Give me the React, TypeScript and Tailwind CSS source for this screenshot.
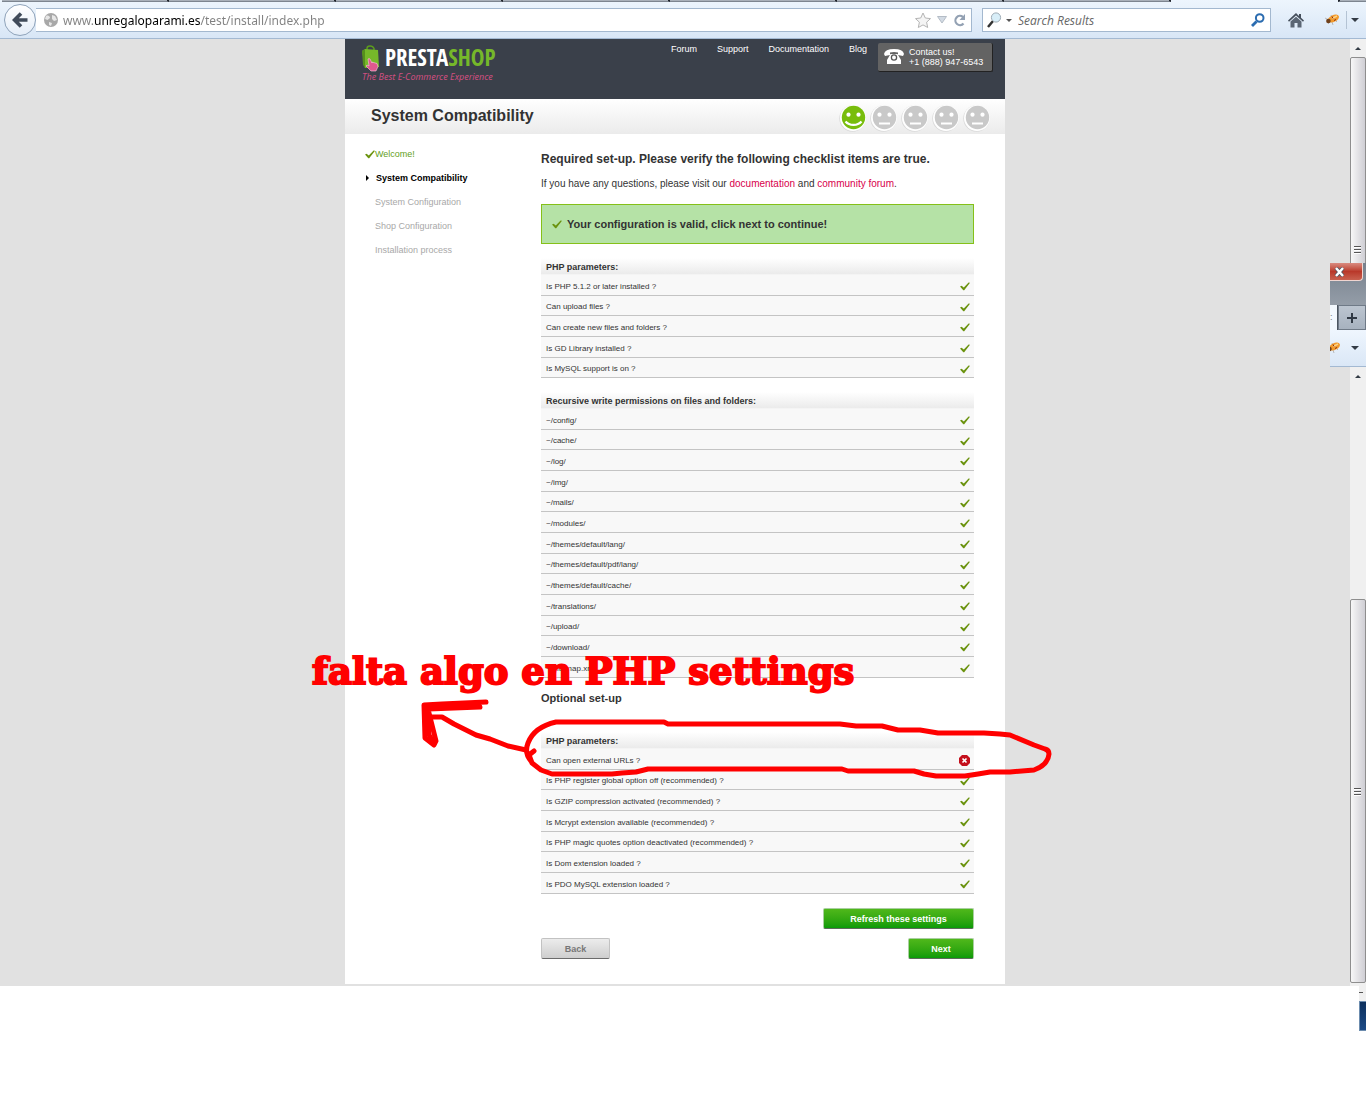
import type { ReactNode } from "react";

const steps = ["System Configuration", "Shop Configuration", "Installation process"];

const required = [
  "Is PHP 5.1.2 or later installed ?",
  "Can upload files ?",
  "Can create new files and folders ?",
  "Is GD Library installed ?",
  "Is MySQL support is on ?",
];

const folders = [
  "~/config/",
  "~/cache/",
  "~/log/",
  "~/img/",
  "~/mails/",
  "~/modules/",
  "~/themes/default/lang/",
  "~/themes/default/pdf/lang/",
  "~/themes/default/cache/",
  "~/translations/",
  "~/upload/",
  "~/download/",
  "~/sitemap.xml",
];

const optional = [
  "Can open external URLs ?",
  "Is PHP register global option off (recommended) ?",
  "Is GZIP compression activated (recommended) ?",
  "Is Mcrypt extension available (recommended) ?",
  "Is PHP magic quotes option deactivated (recommended) ?",
  "Is Dom extension loaded ?",
  "Is PDO MySQL extension loaded ?",
];

function Check() {
  return (
    <svg width="10" height="9" viewBox="0 0 10 9" className="shrink-0">
      <path d="M0 4.6 1.6 3.8 3.8 5.6 8.6.6 10 .8 4.2 8.2H3.3Z" fill="#6b930f" />
    </svg>
  );
}

function Cross() {
  return (
    <svg width="11" height="11" viewBox="0 0 11 11" className="shrink-0">
      <path d="M3 0h5l3 3v5l-3 3H3L0 8V3Z" fill="#c4101c" />
      <path d="M3.5 3.5l4 4m0-4l-4 4" stroke="#fff" strokeWidth="1.7" />
    </svg>
  );
}

function Face({ happy = false }: { happy?: boolean }) {
  return (
    <svg width="28" height="28" viewBox="0 0 28 28">
      <circle cx="13.5" cy="14.5" r="13.2" fill="#d9d9d9" />
      <circle cx="14" cy="14" r="13" fill="#fff" />
      <circle cx="14.5" cy="13.5" r="11.7" fill={happy ? "#78bd0c" : "#c9c9c9"} />
      <circle cx="9.5" cy="10.7" r="2.1" fill="#fff" />
      <circle cx="19.5" cy="10.7" r="2.1" fill="#fff" />
      {happy ? (
        <path d="M6.5 17.5c4 4.6 12 4.6 16 0" fill="none" stroke="#fff" strokeWidth="2.2" />
      ) : (
        <path d="M9 19.5h11" stroke="#fff" strokeWidth="2" />
      )}
    </svg>
  );
}

function Bug() {
  return (
    <svg width="16" height="14" viewBox="0 0 16 14" className="shrink-0">
      <path d="M1 5l4 2M4 11l2-3M9 12l-1-3M7 2l1 3M13 9l-2-2" stroke="#a9a9a9" strokeWidth=".8" />
      <ellipse cx="9.5" cy="5.5" rx="5.8" ry="3.4" transform="rotate(-25 9.5 5.5)" fill="#f29a2c" />
      <path d="M8 5.5l5-2.500" stroke="#fbd48a" strokeWidth="1.5" />
      <circle cx="4.4" cy="8" r="2.3" fill="#70401a" />
      <path d="M10 7.5l2-1M8 3.5l1 2" stroke="#8c2d12" />
    </svg>
  );
}

function Caret({ up = false }: { up?: boolean }) {
  return (
    <svg width="8" height="4" viewBox="0 0 8 4" className="shrink-0">
      <path d={up ? "M1 4h6L4 1Z" : "M0 0h8L4 4Z"} fill="#333b45" />
    </svg>
  );
}

function Grip() {
  return (
    <svg width="8" height="9" viewBox="0 0 8 9">
      <path d="M0 1.5h7M0 4.5h7M0 7.5h7" stroke="#555" />
      <path d="M0 2.5h7M0 5.5h7M0 8.5h7" stroke="#fff" />
    </svg>
  );
}

function Toolbar() {
  return (
    <header className="h-[39px] border-b border-[#a3b9d2] bg-linear-to-b from-[#edf5fd] to-[#d8e6f6]">
      {/* bottom edge of the tab strip */}
      <div className="flex h-[2px] pl-0.5">
        {[1, 2, 3, 4, 5, 6, 7].map((n) => (
          <div key={n} className="w-[167px] border-r-2 border-b border-[#20252c] border-b-[#7d858f] bg-[#a9b0b9]" />
        ))}
        <div className="flex-1" />
        <div className="w-7 border-l-2 border-b border-[#20252c] border-b-[#7d858f] bg-[#a9b0b9]" />
      </div>
      <div className="flex h-9 items-center">
        <button aria-label="Back" className="z-10 ml-1 grid size-8 shrink-0 place-items-center rounded-full border border-[#8fa3ba] bg-linear-to-b from-white to-[#e4edf8]">
          <svg width="16" height="16" viewBox="0 0 16 16">
            <path d="M9 1.5 2.5 8 9 14.5M3 8h12.5" fill="none" stroke="#404b5a" strokeWidth="3.6" />
          </svg>
        </button>
        <div className="flex h-6 flex-1 items-center border border-l-0 border-[#a3b8cf] bg-white pl-2">
          <svg width="14" height="14" viewBox="0 0 14 14" className="shrink-0">
            <circle cx="7" cy="7" r="7" fill="#a8a8a8" />
            <path d="M2 3c2-1 4 0 4 2L3.500 7 1 6ZM8 2l3 1 2 4-3 1-2-2ZM5 9l3 1-1 3-2-1Z" fill="#e6e6e6" />
          </svg>
          <input
            aria-label="Address"
            defaultValue="www.unregaloparami.es/test/install/index.php"
            className="mt-0.5 ml-[5px] min-w-0 flex-1 bg-[linear-gradient(to_right,#808080_31px,#000_31px,#000_137px,#808080_137px)] bg-clip-text font-['Noto_Sans',sans-serif] text-[12px] text-transparent outline-none"
          />
          <svg width="18" height="17" viewBox="0 0 18 17">
            <path d="M9 1l2.300 5 5.200.6-3.900 3.600 1.100 5.300L9 12.900l-4.700 2.600 1.100-5.300L1.500 6.600 6.700 6Z" fill="#f4f4f4" stroke="#b5b5b5" />
          </svg>
          <svg width="10" height="8" viewBox="0 0 10 8" className="ml-[5px]">
            <path d="M.5.5h9L5 7Z" fill="#d3dbe4" stroke="#b4bcc6" />
          </svg>
          <svg width="13" height="13" viewBox="0 0 13 13" className="mr-[5px] ml-1.5">
            <path d="M10.500 9.500A4.600 4.600 0 1 1 10 3" fill="none" stroke="#93a1b3" strokeWidth="2.200" />
            <path d="M12 0v6H6.500Z" fill="#93a1b3" />
          </svg>
        </div>
        <div className="ml-2.5 flex h-6 w-[289px] items-center border border-[#a3b8cf] bg-white pr-[5px] pl-1">
          <svg width="16" height="16" viewBox="0 0 16 16" className="shrink-0">
            <path d="M1 15l5-6" stroke="#333" strokeWidth="2.500" />
            <circle cx="9" cy="5.500" r="4.600" fill="#d8eef8" stroke="#9eabb5" />
          </svg>
          <svg width="6" height="3" viewBox="0 0 6 3" className="ml-[3px] shrink-0">
            <path d="M0 0h6L3 3Z" fill="#555" />
          </svg>
          <input aria-label="Search" placeholder="Search Results" className="mt-0.5 ml-1.5 min-w-0 flex-1 font-['Open_Sans',sans-serif] text-[12px] italic outline-none placeholder:text-[#666]" />
          <svg width="14" height="14" viewBox="0 0 14 14">
            <path d="M1 13l4.500-4.500" stroke="#2b6cb0" strokeWidth="2.800" />
            <circle cx="8.700" cy="5" r="3.800" fill="none" stroke="#2b6cb0" strokeWidth="2" />
          </svg>
        </div>
        <button aria-label="Home" className="ml-[17px]">
          <svg width="16" height="15" viewBox="0 0 16 15">
            <path d="M8 0 0 7.500l1 1.200L8 2.500l7 6.200 1-1.200-3-2.800V1h-2v2Z" fill="#454f5c" />
            <path d="M2.500 8.500 8 3.800l5.500 4.700V14.500H9.500V10h-3v4.500h-4Z" fill="#5b6674" />
          </svg>
        </button>
        <div className="ml-5 flex items-center pr-[7px]">
          <Bug />
          <span className="mr-1 ml-1.5 h-[18px] w-px bg-[#b4c3d4]" />
          <Caret />
        </div>
      </div>
    </header>
  );
}

function Phone() {
  return (
    <svg width="20" height="16" viewBox="0 0 20 16" className="shrink-0">
      <path d="M0 5Q1 0 10 0t10 5l-1 2-5-1V3.500Q10 2.500 6 3.500V6L1 7Z" fill="#fff" />
      <path d="M6.500 5h7l3.500 6v4H3v-4Z" fill="#fff" />
      <circle cx="10" cy="8.500" r="2.600" fill="#fff" stroke="#555" strokeWidth="1.300" />
    </svg>
  );
}

function ShopHeader() {
  return (
    <div className="flex h-[60px] items-start bg-[#3a404a] text-[9px] text-white">
      <a href="#home" className="mt-1.5 ml-4 block">
        <span className="flex h-[27px]">
          <svg width="20" height="27" viewBox="0 0 20 27">
            <path d="M6 6V3.500Q6 1 9 1t4 2.500V6" fill="none" stroke="#5c9c1c" strokeWidth="1.500" />
            <path d="M1 6l3-2 13 1 1 17-14 1Z" fill="#76b82a" />
            <path d="M1 6l3-2v19L2 20Z" fill="#568f1c" />
            <path d="M7 14q1-1 2 0l2 4V17l5 1.500 1 3-2 4.500h-5l-5-5 1-1 2 1Z" fill="#e0588f" stroke="#f8c8dc" strokeWidth=".6" />
          </svg>
          <span className="ml-1 font-['Open_Sans_Condensed','Open_Sans',sans-serif] text-[23px] leading-[25px] font-light">
            PRESTA<span className="text-[#76b82a]">SHOP</span>
          </span>
        </span>
        <span className="ml-px block font-['Noto_Sans',sans-serif] text-[9px] leading-2.5 text-[#cf4f80] italic">
          The Best E-Commerce Experience
        </span>
      </a>
      <nav className="ml-auto flex pt-1">
        {["Forum", "Support", "Documentation", "Blog"].map((item) => (
          <a key={item} href="#menu" className="mr-5 leading-3 last:mr-[11px]">{item}</a>
        ))}
      </nav>
      <div className="mt-1 mr-3 flex h-[29px] w-[115px] items-center rounded-xs border-r border-b border-[#222] bg-[#636363] pl-1.5">
        <Phone />
        <p className="ml-[5px] leading-[10px]">Contact us!<br />+1 (888) 947-6543</p>
      </div>
    </div>
  );
}

function Section({ title, items, failed, className }: { title: string; items: string[]; failed?: number; className: string }) {
  return (
    <section className={className}>
      <h4 className="h-[17px] border-b border-[#f4f4f4] bg-linear-to-b from-white to-[#ebebeb] pl-[5px] text-[9px] leading-[18px] font-bold">{title}</h4>
      <ul>
        {items.map((item, i) => (
          <li key={item} className="flex h-[21px] items-center justify-between border-b border-[#c4c4c4] bg-[#f8f8f8] pt-[3px] pr-1 pl-[5px] text-[8px] nth-[3n+2]:h-5">
            {item}
            {i === failed ? <Cross /> : <Check />}
          </li>
        ))}
      </ul>
    </section>
  );
}

function GreenButton({ children, className }: { children: ReactNode; className: string }) {
  return (
    <button className={`h-[21px] rounded-xs border border-[#a9cfa0] border-b-[#5d6b5a] bg-linear-to-b from-[#4fb81b] to-[#089b08] pt-0.5 text-[9px] font-bold text-white ${className}`}>
      {children}
    </button>
  );
}

function Annotation() {
  return (
    <div className="pointer-events-none absolute top-[610px] -left-9">
      <p className="h-10 pl-[3px] font-['DejaVu_Serif',serif] text-[37px] leading-[44px] font-bold whitespace-nowrap text-[#f00] [-webkit-text-stroke:2px_#f00]">
        falta algo en PHP settings
      </p>
      <svg width="750" height="90" viewBox="309 688 750 90" fill="none" stroke="#f00" strokeWidth="5" strokeLinecap="round" strokeLinejoin="round">
        <path d="M534 750 529 754 532 762 541 769 552 773H612L622 772 636 771 648 768H842L848 770H914L924 773 936 775H965L978 773 990 771H1010L1034 769Q1048 764 1049 753 1049 749 1045 748L1034 744 1010 734 1000 733 984 732H938L920 729H898L882 725H856L840 723H668L664 721H556Q534 726 528 742 524 752 531 760" />
        <path d="M526 749 508 745 490 738 476 734 454 723 442 716H430" />
        <path d="M486 701 442 703 424 704 425 737 434 744 436 740 428 708 480 706" />
        <path d="M427 708 429 734 434 742" />
      </svg>
    </div>
  );
}

/* piece of another browser window that overlaps the scrollbar */
function WindowPiece() {
  return (
    <div className="absolute top-[224px] right-0 h-[104px] w-9 overflow-hidden border-b border-[#a3b9d2] bg-[#dfebf8]">
      <div className="h-[42px] bg-linear-to-b from-[#77818d] to-[#949da8]">
        <button aria-label="Close" className="flex h-[18px] w-[33px] items-center rounded-br border-r border-b border-[#f0d5d0] bg-linear-to-b from-[#d98b80] via-[#b9382a] to-[#c8604f]">
          <svg width="12" height="10" viewBox="0 0 12 10" className="ml-1">
            <path d="M2 1l7 8M9 1L2 9" stroke="#4d5360" strokeWidth="4" />
            <path d="M2 1l7 8M9 1L2 9" stroke="#fff" strokeWidth="2.500" />
          </svg>
        </button>
      </div>
      <div className="flex h-[25px]">
        <div className="w-2 border-r border-[#4c5661] bg-[#f2f8fe] text-[9px] leading-6 text-[#777]">:</div>
        <button aria-label="New tab" className="grid flex-1 place-items-center border border-[#6f7a87] bg-linear-to-b from-[#bcc5d0] to-[#a7b2bf]">
          <svg width="10" height="10" viewBox="0 0 10 10">
            <path d="M5 0v10M0 5h10" stroke="#303944" strokeWidth="2" />
          </svg>
        </button>
      </div>
      <div className="flex h-9 items-center justify-end bg-linear-to-b from-[#eff6fe] to-[#dae7f6] pr-[7px]">
        <Bug />
        <span className="mr-1 ml-1.5 h-[18px] w-px bg-[#b4c3d4]" />
        <Caret />
      </div>
    </div>
  );
}

function Scrollbar() {
  return (
    <aside className="flex w-4 shrink-0 flex-col bg-[#f0f0f0]">
      <div className="grid h-[18px] place-items-center"><Caret up /></div>
      <div className="flex h-[208px] items-end justify-center rounded-xs border border-[#8e8e8e] bg-linear-to-r from-[#f7f7f7] to-[#cfced4] pb-2.5"><Grip /></div>
      <div className="mt-[102px] grid h-[18px] place-items-center"><Caret up /></div>
      <div className="mt-[214px] mb-[3px] grid flex-1 place-items-center rounded-xs border border-[#8e8e8e] bg-linear-to-r from-[#f7f7f7] to-[#cfced4]"><Grip /></div>
    </aside>
  );
}

export default function App() {
  return (
    <div className="min-h-screen overflow-hidden bg-white font-['Liberation_Sans',Arial,sans-serif] text-[#333]">
      <Toolbar />
      <div className="relative flex">
        <div className="flex-1 bg-[#e1e1e1] pb-[2px]">
          <div className="relative mx-auto max-w-[660px] bg-white">
            <ShopHeader />
            <div className="flex h-[35px] items-start bg-linear-to-b from-white to-[#ebebeb] pr-3.5 pl-[26px]">
              <h1 className="flex-1 text-[16px] leading-[34px] font-bold">System Compatibility</h1>
              <div className="flex gap-[3px] pt-[5px]">
                <Face happy />
                <Face />
                <Face />
                <Face />
                <Face />
              </div>
            </div>
            <div className="flex">
              <ol className="w-[196px] shrink-0 pt-2 pl-5 text-[9px] leading-6 text-[#a8a8a8]">
                <li className="flex items-center text-[#64a01c]"><Check />Welcome!</li>
                <li className="flex items-center font-bold text-black">
                  <svg width="11" height="6" viewBox="0 0 11 6"><path d="M1 0v6l3-3Z" /></svg>
                  System Compatibility
                </li>
                {steps.map((step) => (
                  <li key={step} className="pl-2.5">{step}</li>
                ))}
              </ol>
              <main className="mr-[31px] flex-1 pt-[15px] pb-[25px]">
                <h2 className="text-[12px] leading-5 font-bold">Required set-up. Please verify the following checklist items are true.</h2>
                <p className="mt-[5px] text-[10px] leading-5">
                  If you have any questions, please visit our <a href="#docs" className="text-[#d8004c]">documentation</a> and <a href="#forum" className="text-[#d8004c]">community forum</a>.
                </p>
                <div className="mt-2.5 flex h-10 items-center gap-[5px] border border-[#85c018] bg-[#b5e2a6] pl-2.5 text-[11px] font-bold">
                  <Check />
                  Your configuration is valid, click next to continue!
                </div>
                <Section title="PHP parameters:" items={required} className="mt-3.5" />
                <Section title="Recursive write permissions on files and folders:" items={folders} className="mt-3.5" />
                <h3 className="mt-2.5 text-[11px] leading-5 font-bold">Optional set-up</h3>
                <Section title="PHP parameters:" items={optional} failed={0} className="mt-6" />
                <div className="mt-3.5 flex justify-end">
                  <GreenButton className="w-[151px]">Refresh these settings</GreenButton>
                </div>
                <div className="mt-[9px] flex justify-between">
                  <button className="h-[21px] w-[69px] rounded-xs border border-[#c2c2c2] border-b-[#6b6b6b] bg-linear-to-b from-[#ececec] to-[#cecece] pt-0.5 text-[9px] font-bold text-[#777]">Back</button>
                  <GreenButton className="w-[66px]">Next</GreenButton>
                </div>
              </main>
            </div>
            <Annotation />
          </div>
        </div>
        <Scrollbar />
        <WindowPiece />
      </div>
      <div className="flex flex-col items-end">
        <div className="h-[15px] w-[7px] bg-[#f0f0f0] pt-1.5">
          <div className="h-px w-1 bg-[#555]" />
        </div>
        <div className="h-[30px] w-[7px] border border-r-0 border-[#6c8cae] bg-linear-to-b from-[#0c2f5c] to-[#1c4a86]" />
      </div>
    </div>
  );
}
